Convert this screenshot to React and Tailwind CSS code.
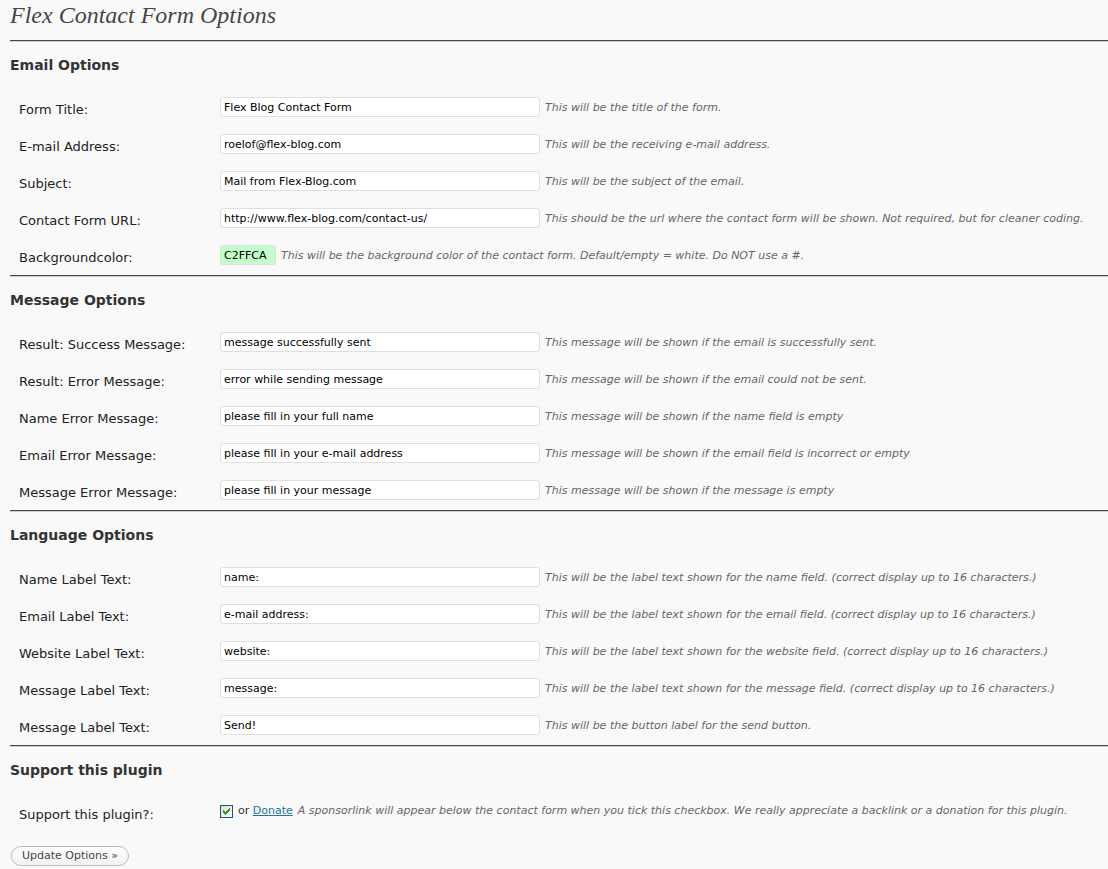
import React, { useState } from "react";

const sections = [
  {
    title: "Email Options",
    fields: [
      { id: "form-title", label: "Form Title:", value: "Flex Blog Contact Form", hint: "This will be the title of the form." },
      { id: "email-address", label: "E-mail Address:", value: "roelof@flex-blog.com", hint: "This will be the receiving e-mail address." },
      { id: "subject", label: "Subject:", value: "Mail from Flex-Blog.com", hint: "This will be the subject of the email." },
      { id: "form-url", label: "Contact Form URL:", value: "http://www.flex-blog.com/contact-us/", hint: "This should be the url where the contact form will be shown. Not required, but for cleaner coding." },
      { id: "background", label: "Backgroundcolor:", value: "C2FFCA", swatch: true, hint: "This will be the background color of the contact form. Default/empty = white. Do NOT use a #." },
    ],
  },
  {
    title: "Message Options",
    fields: [
      { id: "success-message", label: "Result: Success Message:", value: "message successfully sent", hint: "This message will be shown if the email is successfully sent." },
      { id: "error-message", label: "Result: Error Message:", value: "error while sending message", hint: "This message will be shown if the email could not be sent." },
      { id: "name-error", label: "Name Error Message:", value: "please fill in your full name", hint: "This message will be shown if the name field is empty" },
      { id: "email-error", label: "Email Error Message:", value: "please fill in your e-mail address", hint: "This message will be shown if the email field is incorrect or empty" },
      { id: "message-error", label: "Message Error Message:", value: "please fill in your message", hint: "This message will be shown if the message is empty" },
    ],
  },
  {
    title: "Language Options",
    fields: [
      { id: "name-label", label: "Name Label Text:", value: "name:", hint: "This will be the label text shown for the name field. (correct display up to 16 characters.)" },
      { id: "email-label", label: "Email Label Text:", value: "e-mail address:", hint: "This will be the label text shown for the email field. (correct display up to 16 characters.)" },
      { id: "website-label", label: "Website Label Text:", value: "website:", hint: "This will be the label text shown for the website field. (correct display up to 16 characters.)" },
      { id: "message-label", label: "Message Label Text:", value: "message:", hint: "This will be the label text shown for the message field. (correct display up to 16 characters.)" },
      { id: "send-label", label: "Message Label Text:", value: "Send!", hint: "This will be the button label for the send button." },
    ],
  },
];

function Section({ title, children }) {
  return (
    <section>
      <div className="h-0.5 border-t border-[#464646] bg-[#d0d0d0]" />
      <h3 className="h-12 pt-3 text-[14px] leading-[22px] font-bold text-[#333]">{title}</h3>
      {children}
    </section>
  );
}

function Row({ id, label, children }) {
  return (
    <div className="flex h-[37px] items-start pt-[7px]">
      <label htmlFor={id} className="w-[210px] shrink-0 pt-[3px] pl-[9px] text-[13px] leading-5 text-[#222]">
        {label}
      </label>
      {children}
    </div>
  );
}

function Hint({ id, children }) {
  return (
    <span id={id} className="text-[11px] leading-4 text-[#666] italic">
      {children}
    </span>
  );
}

function Field({ field }) {
  const [value, setValue] = useState(field.value);
  const look = field.swatch ? "w-14 bg-[#c2ffca]" : "w-80 bg-white";
  return (
    <Row id={field.id} label={field.label}>
      <div className="flex items-baseline gap-[5px] whitespace-nowrap">
        <input
          id={field.id}
          type="text"
          value={value}
          onChange={(e) => setValue(e.target.value)}
          aria-describedby={field.id + "-hint"}
          className={"h-5 rounded-[3px] border border-[#dfdfdf] px-[3px] text-[11px] text-black outline-none " + look}
        />
        <Hint id={field.id + "-hint"}>{field.hint}</Hint>
      </div>
    </Row>
  );
}

export default function App() {
  const [support, setSupport] = useState(true);
  return (
    <main className="min-h-screen overflow-x-hidden bg-[#f9f9f9] pl-2.5 font-['DejaVu_Sans',Verdana,sans-serif]">
      <h1 className="h-10 font-['Liberation_Serif',Georgia,serif] text-[24px] leading-[30px] text-[#464646] italic">
        Flex Contact Form Options
      </h1>
      <form onSubmit={(e) => e.preventDefault()}>
        {sections.map((section) => (
          <Section key={section.title} title={section.title}>
            {section.fields.map((field) => (
              <Field key={field.id} field={field} />
            ))}
          </Section>
        ))}
        <Section title="Support this plugin">
          <Row id="support" label="Support this plugin?:">
            <div className="flex h-[18px] items-center gap-[5px] whitespace-nowrap">
              <span className="grid size-[13px]">
                <input
                  id="support"
                  type="checkbox"
                  checked={support}
                  onChange={(e) => setSupport(e.target.checked)}
                  aria-describedby="support-hint"
                  className="peer col-start-1 row-start-1 size-[13px] appearance-none border border-[#1c5180] bg-linear-to-br from-[#dcdcd7] to-white"
                />
                <svg
                  viewBox="0 0 13 13"
                  className="pointer-events-none invisible col-start-1 row-start-1 size-[13px] peer-checked:visible"
                  fill="#21a121"
                  shapeRendering="crispEdges"
                  aria-hidden="true"
                >
                  <path d="M3 5h1v1h1v1h1v-1h1v-1h1v-1h1v-1h1v3h-1v1h-1v1h-1v1h-1v1h-1v-1h-1v-1h-1z" />
                </svg>
              </span>
              <span className="text-[11px] leading-4 text-[#333]">
                or{" "}
                <a href="#donate" className="text-[#21759b] underline">
                  Donate
                </a>
              </span>
              <Hint id="support-hint">
                A sponsorlink will appear below the contact form when you tick this checkbox. We really appreciate a backlink or a donation for this plugin.
              </Hint>
            </div>
          </Row>
        </Section>
        <button
          type="submit"
          className="mt-3.5 ml-px flex h-5 items-center rounded-full border border-[#bbb] bg-linear-to-b from-white to-[#f2f2f2] px-2.5 text-[11px] text-[#464646]"
        >
          Update Options »
        </button>
      </form>
    </main>
  );
}
